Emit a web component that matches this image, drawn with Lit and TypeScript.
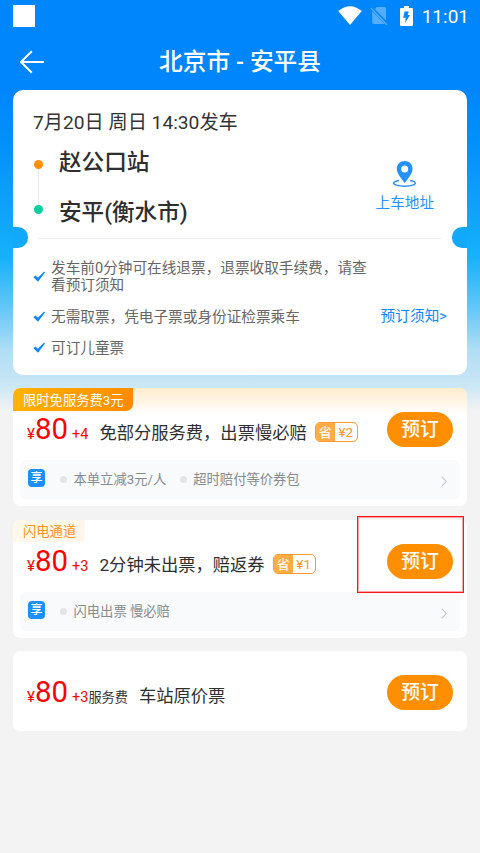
import { LitElement, html, css, svg, nothing } from "lit";
import { customElement, property } from "lit/decorators.js";

const check = svg`<path d="M0.4 6.3 L2.6 4.5 L4.8 6.7 L11.2 0.6 L12 1.4 L5 10.8 Z" fill="#0d86ff"/>`;

interface Fare {
  tag?: string;
  tagKind?: string;
  extra: string;
  unit?: string;
  name: string;
  save?: string;
  perks?: string[];
}

const FARES: Fare[] = [
  { tag: "限时免服务费3元", tagKind: "hot", extra: "+4", name: "免部分服务费，出票慢必赔", save: "¥2", perks: ["本单立减3元/人", "超时赔付等价券包"] },
  { tag: "闪电通道", tagKind: "fast", extra: "+3", name: "2分钟未出票，赔返券", save: "¥1", perks: ["闪电出票 慢必赔"] },
  { extra: "+3", unit: "服务费", name: "车站原价票" },
];

@customElement("fare-card")
export class FareCard extends LitElement {
  @property({ attribute: false }) fare!: Fare;

  static styles = css`
    :host { display: block; }
    .card { background: #fff; border-radius: 7px; height: 118px; overflow: hidden; display: flex; flex-direction: column; align-items: stretch; }
    .card.plain { height: 80px; }
    .card.hot { background: linear-gradient(#ffecce 0, #fff 27px); }
    .head { height: 24px; flex: none; display: flex; }
    .tag { height: 23px; line-height: 25px; font-size: 13.3px; padding-left: 10px; box-sizing: border-box; white-space: nowrap; }
    .tag.hot { width: 120px; color: #fff; background: linear-gradient(100deg, #ffb400, #ff8a00); border-radius: 7px 0 7px 0; }
    .tag.fast { width: 72px; color: #fb9320; background: #fff8ea; border-radius: 7px 0 4px 0; height: 22px; line-height: 24px; }
    .row { height: 35px; flex: none; display: flex; align-items: baseline; padding: 0 14px 0 14px; white-space: nowrap; }
    .price { color: #fe0000; font-size: 15px; line-height: 34px; width: 45px; flex: none; }
    .price b { font-weight: 400; font-size: 29.4px; }
    .extra { color: #fe0000; font-size: 14.5px; flex: none; }
    .unit { color: #333; font-size: 13.2px; }
    .name { color: #2f2f2f; font-size: 17.3px; line-height: 36px; margin-left: 11px; flex: none; }
    .save { align-self: flex-start; margin: 10px 0 0 8px; width: 43px; height: 20px; box-sizing: border-box; border: 1.5px solid #fd9a30; border-radius: 5px; display: flex; overflow: hidden; font-size: 13.4px; line-height: 19px; text-align: center; }
    .save i { font-style: normal; color: #fff; background: #ffac45; width: 19px; font-size: 13px; }
    .save span { color: #fd9226; flex: 1; }
    .book { align-self: flex-start; margin-left: auto; width: 66px; height: 35px; border: 0; border-radius: 18px; background: #ff8f00; color: #fff; font: 500 18.8px/36px Roboto, "Noto Sans CJK SC", sans-serif; padding: 0; }
    .perks { margin: 13px 7px 0; height: 39px; background: #f8fafc; border-radius: 6px; display: flex; align-items: center; padding: 0 13px 0 8px; font-size: 13.3px; color: #868b8e; line-height: 41px; white-space: nowrap; }
    .share { width: 17px; height: 18px; line-height: 19px; margin-top: -3px; border-radius: 4px; background: #1c8fff; color: #fff; font-size: 12px; font-weight: 500; text-align: center; margin-right: 15px; }
    .perk { display: flex; align-items: center; margin-right: 13.5px; }
    .dot { width: 7px; height: 7px; border-radius: 50%; background: #e3e4e5; margin-right: 6.5px; }
    .go { margin-left: auto; margin-top: 4px; display: block; }
  `;

  render() {
    const f = this.fare;
    return html`
      <div class="card ${f.tagKind ?? "plain"}">
        <div class="head">${f.tag ? html`<div class="tag ${f.tagKind}">${f.tag}</div>` : nothing}</div>
        <div class="row">
          <div class="price">¥<b>80</b></div>
          <div class="extra">${f.extra}${f.unit ? html`<span class="unit">${f.unit}</span>` : nothing}</div>
          <div class="name">${f.name}</div>
          ${f.save ? html`<div class="save"><i>省</i><span>${f.save}</span></div>` : nothing}
          <button class="book">预订</button>
        </div>
        ${f.perks
          ? html`<div class="perks">
              <div class="share">享</div>
              ${f.perks.map((p) => html`<div class="perk"><span class="dot"></span>${p}</div>`)}
              <svg class="go" width="6" height="11" viewBox="0 0 6 11"><path d="M0.7 0.7 L5.3 5.5 L0.7 10.3" fill="none" stroke="#c6c9cc" stroke-width="1.1"/></svg>
            </div>`
          : nothing}
      </div>
    `;
  }
}

@customElement("app-root")
export class AppRoot extends LitElement {
  static styles = css`
    :host { display: block; position: relative; height: 853px; overflow: hidden; font-family: Roboto, "Noto Sans CJK SC", sans-serif; background: linear-gradient(#0086fc 0, #0086fc 90px, #0090fb 140px, #0d9dfa 190px, #12abfa 238px, #18b2fa 258px, #66c8f8 310px, #b0def5 350px, #cae7f5 385px, #f3f3f3 411px); }
    .status { height: 33px; display: flex; align-items: flex-start; color: #fff; padding: 0 11px 0 13px; }
    .square { width: 22px; height: 22px; margin-top: 5px; background: #fff; }
    .wifi { margin: 6px 0 0 auto; }
    .sim { margin: 6px 0 0 8px; }
    .battery { margin: 6px 0 0 12px; }
    .clock { margin-left: 9px; font-size: 19px; line-height: 33px; }
    .bar { height: 57px; display: grid; grid-template-columns: 60px 1fr 60px; align-items: center; }
    .back { margin-left: 20px; }
    .title { text-align: center; font-size: 23.7px; font-weight: 500; color: #fff; line-height: 59px; height: 57px; white-space: nowrap; }
    .trip { position: relative; height: 285px; margin: 0 13px; background: #fff; border-radius: 10px; box-sizing: border-box; padding: 15px 20px 0; color: #333; }
    .date { font-size: 19.2px; line-height: 35px; height: 32px; white-space: nowrap; }
    .route { display: flex; height: 100px; }
    .line { width: 10px; display: flex; flex-direction: column; align-items: center; padding-top: 23px; }
    .pt { width: 9px; height: 9px; border-radius: 50%; background: #ff8f00; }
    .pt.end { background: #07cfa0; }
    .link { width: 1px; height: 35.5px; background: #eaeaea; }
    .stops { margin-left: 16px; font-size: 22.6px; font-weight: 500; color: #2e2e2e; line-height: 52px; white-space: nowrap; }
    .stops div:first-child { height: 50px; }
    .addr { margin: 24px 13px 0 auto; display: flex; flex-direction: column; align-items: center; font-size: 14.6px; line-height: 20px; color: #2590ff; }
    .addr svg { margin-bottom: 6px; }
    .divider { height: 1px; background: #ececec; margin: 1px 6px 0 5px; }
    .notch { position: absolute; top: 137px; width: 15px; height: 21px; background: #12a9fa; }
    .notch.l { left: 0; border-radius: 0 10px 10px 0; }
    .notch.r { right: 0; border-radius: 10px 0 0 10px; }
    .rules { display: flex; font-size: 14.65px; line-height: 17px; color: #666; }
    .list { padding-top: 21px; display: flex; flex-direction: column; gap: 14.5px; }
    .rule { display: flex; align-items: center; gap: 6px; }
    .rule svg { margin-top: -2px; }
    .rule div { width: 320px; }
    .more { position: absolute; right: 20px; top: 216px; color: #0d86ff; white-space: nowrap; font-size: 14.7px; line-height: 21px; }
    .fares { display: flex; flex-direction: column; gap: 13.5px; margin: 13px 13px 0; }
    .mark { position: absolute; left: 357px; top: 516px; width: 107px; height: 77px; box-sizing: border-box; border: 1px solid #fb1714; box-shadow: inset 0 0 0 1px rgba(255, 30, 30, 0.4); }
  `;

  private rule(text: unknown) {
    return html`<div class="rule"><svg width="12" height="11" viewBox="0 0 12 11">${check}</svg><div>${text}</div></div>`;
  }

  render() {
    return html`
      <div class="status">
        <div class="square"></div>
        <svg class="wifi" width="24" height="19" viewBox="0 0 24 19"><path d="M0.2 5 Q12 -4.4 23.8 5 L12 19 Z" fill="#fff"/></svg>
        <svg class="sim" width="18" height="20" viewBox="0 0 18 20"><path d="M6.6 1 H14.5 Q16 1 16 2.5 V14.6 L5 3.2 Z M2.2 5.2 L14.8 18 H3.7 Q2.2 18 2.2 16.5 Z" fill="#55adff"/><path d="M0.8 2 L16.9 18.7" stroke="#55adff" stroke-width="1.4"/></svg>
        <svg class="battery" width="13" height="20" viewBox="0 0 13 20"><path fill-rule="evenodd" d="M4 0 H9 V2 H11.8 Q13 2 13 3.2 V18.8 Q13 20 11.8 20 H1.2 Q0 20 0 18.8 V3.2 Q0 2 1.2 2 H4 Z M4.6 5.4 H8.8 L7.6 9 H10 L5 17 L5.8 11.8 H3.2 Z" fill="#fff"/></svg>
        <div class="clock">11:01</div>
      </div>
      <div class="bar">
        <svg class="back" width="24" height="24" viewBox="0 0 24 24"><path d="M11.8 1.2 L1 12 L11.8 22.8 M1 12 H23.8" fill="none" stroke="#fff" stroke-width="2"/></svg>
        <div class="title">北京市 - 安平县</div>
      </div>
      <div class="trip">
        <div class="date">7月20日 周日 14:30发车</div>
        <div class="route">
          <div class="line"><span class="pt"></span><span class="link"></span><span class="pt end"></span></div>
          <div class="stops"><div>赵公口站</div><div>安平(衡水市)</div></div>
          <div class="addr">
            <svg width="23" height="26" viewBox="0 0 23 26"><path fill-rule="evenodd" d="M11.7 0 C16.3 0 19.6 3.4 19.6 7.8 C19.6 12.4 15.5 17.2 11.7 22 C7.9 17.2 3.8 12.4 3.8 7.8 C3.8 3.4 7.1 0 11.7 0 Z M11.7 4.5 A3.5 3.5 0 1 0 11.7 11.5 A3.5 3.5 0 1 0 11.7 4.5 Z" fill="#2590ff"/><path d="M6 19.4 C-0.5 20.6 -0.6 22.8 3.4 24.1 C7.8 25.6 15.4 25.6 19.8 24.1 C23.6 22.8 23.4 20.6 17.2 19.4" fill="none" stroke="#2590ff" stroke-width="1.5"/></svg>
            <span>上车地址</span>
          </div>
        </div>
        <div class="divider"></div>
        <div class="rules">
          <div class="list">
            ${this.rule("发车前0分钟可在线退票，退票收取手续费，请查看预订须知")}
            ${this.rule("无需取票，凭电子票或身份证检票乘车")}
            ${this.rule("可订儿童票")}
          </div>
        </div>
        <div class="more">预订须知&gt;</div>
        <span class="notch l"></span><span class="notch r"></span>
      </div>
      <div class="fares">${FARES.map((f) => html`<fare-card .fare=${f}></fare-card>`)}</div>
      <div class="mark"></div>
    `;
  }
}
